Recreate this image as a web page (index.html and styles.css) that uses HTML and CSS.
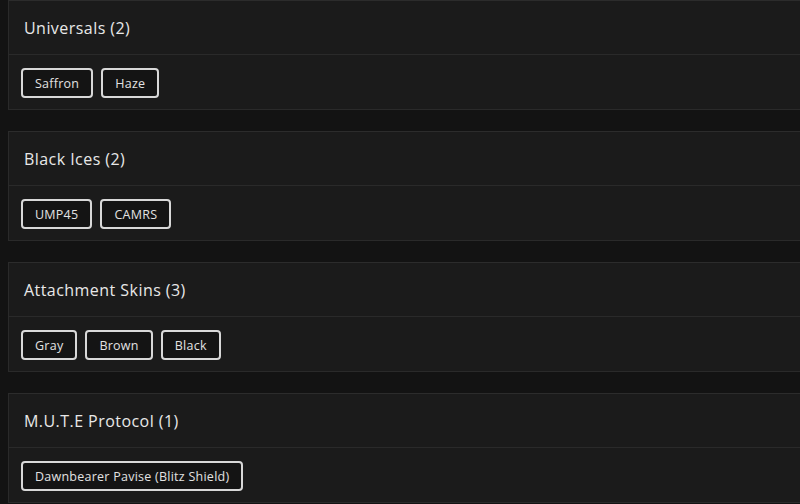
FILE: index.html
```html
<!DOCTYPE html>
<html>
<head>
<meta charset="utf-8">
<link rel="stylesheet" href="styles.css">
</head>
<body>
<div class="list">
  <section class="card">
    <div class="card-head"><h2>Universals (2)</h2></div>
    <div class="card-body">
      <span class="chip">Saffron</span>
      <span class="chip">Haze</span>
    </div>
  </section>
  <section class="card">
    <div class="card-head"><h2>Black Ices (2)</h2></div>
    <div class="card-body">
      <span class="chip">UMP45</span>
      <span class="chip">CAMRS</span>
    </div>
  </section>
  <section class="card">
    <div class="card-head"><h2>Attachment Skins (3)</h2></div>
    <div class="card-body">
      <span class="chip">Gray</span>
      <span class="chip">Brown</span>
      <span class="chip">Black</span>
    </div>
  </section>
  <section class="card">
    <div class="card-head"><h2>M.U.T.E Protocol (1)</h2></div>
    <div class="card-body">
      <span class="chip">Dawnbearer Pavise (Blitz Shield)</span>
    </div>
  </section>
</div>
</body>
</html>
```
FILE: styles.css
```css
html, body {
  margin: 0;
  padding: 0;
  background: #131313;
  overflow: hidden;
  height: 504px;
}
body {
  font-family: "Open Sans", "Noto Sans", sans-serif;
  color: #e6e6e6;
}
.list {
  display: flex;
  flex-direction: column;
  gap: 21px;
  padding-left: 8px;
  width: 820px;
}
.card {
  background: #1b1b1b;
  border: 1px solid #2a2a2a;
  border-top-color: #2c2c2c;
}
.card-head {
  height: 53px;
  display: flex;
  align-items: center;
  padding: 0 15px;
  border-bottom: 1px solid #2a2a2a;
}
.card-head h2 {
  margin: 0;
  font-size: 16px;
  font-weight: 500;
  letter-spacing: 0.45px;
  color: #e8e8e8;
}
.card-body {
  display: flex;
  gap: 8px;
  padding: 13px 12px 11px;
}
.chip {
  display: inline-flex;
  align-items: center;
  height: 30px;
  box-sizing: border-box;
  padding: 0 12px;
  border: 2px solid #d8d8d8;
  border-radius: 4px;
  background: #141414;
  font-size: 12.5px;
  letter-spacing: 0.25px;
  color: #e2e2e2;
}
```
